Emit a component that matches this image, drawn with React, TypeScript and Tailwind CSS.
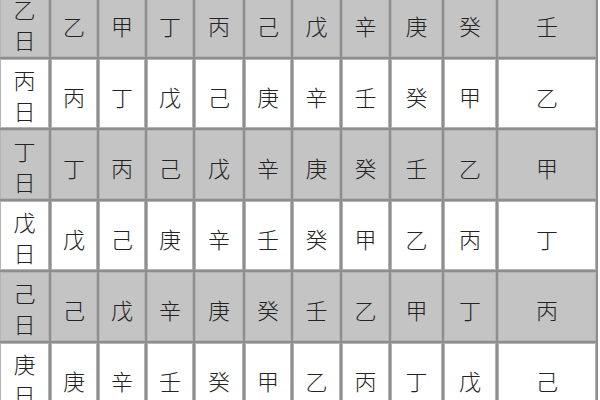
import React from 'react'

const rows: { label: string; cells: string[]; gray: boolean }[] = [
  { label: '乙', cells: ['乙', '甲', '丁', '丙', '己', '戊', '辛', '庚', '癸', '壬'], gray: true },
  { label: '丙', cells: ['丙', '丁', '戊', '己', '庚', '辛', '壬', '癸', '甲', '乙'], gray: false },
  { label: '丁', cells: ['丁', '丙', '己', '戊', '辛', '庚', '癸', '壬', '乙', '甲'], gray: true },
  { label: '戊', cells: ['戊', '己', '庚', '辛', '壬', '癸', '甲', '乙', '丙', '丁'], gray: false },
  { label: '己', cells: ['己', '戊', '辛', '庚', '癸', '壬', '乙', '甲', '丁', '丙'], gray: true },
  { label: '庚', cells: ['庚', '辛', '壬', '癸', '甲', '乙', '丙', '丁', '戊', '己'], gray: false },
]

export default function App() {
  return (
    <div className="w-[600px] h-[400px] overflow-hidden bg-white font-['Noto_Sans_CJK_SC',sans-serif] font-light text-[#222]">
      <div className="-mt-[12px] w-[598px] bg-[#8e8e8e] pr-[2px]">
        <div className="grid grid-cols-[49px_46px_46px_46px_48px_46px_47px_47px_51px_52px_98px] auto-rows-[69px] gap-[2px]">
          {rows.map((row) => (
            <React.Fragment key={row.label}>
              <div
                className={`flex flex-col items-center justify-center pt-[3px] border border-[#b4b4b4] text-[22px] leading-[31px] ${
                  row.gray ? 'bg-[#c4c4c4]' : 'bg-white'
                }`}
              >
                <span>{row.label}</span>
                <span>日</span>
              </div>
              {row.cells.map((c, i) => (
                <div
                  key={i}
                  className={`flex items-center justify-center pt-[6px] border border-[#b4b4b4] text-[22px] ${
                    row.gray ? 'bg-[#c4c4c4]' : 'bg-white'
                  }`}
                >
                  {c}
                </div>
              ))}
            </React.Fragment>
          ))}
        </div>
      </div>
    </div>
  )
}
